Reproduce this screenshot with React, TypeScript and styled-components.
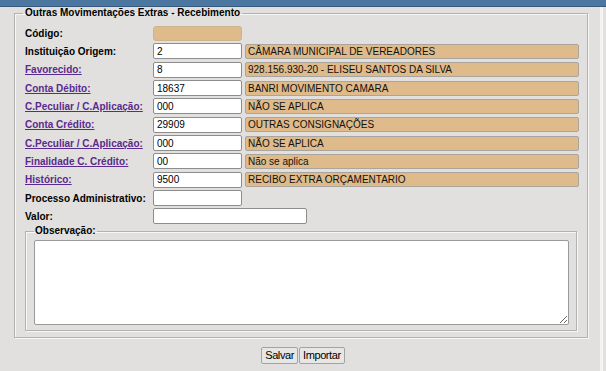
import styled, { createGlobalStyle } from "styled-components";

const GlobalStyle = createGlobalStyle`
  html, body {
    margin: 0;
    padding: 0;
    background: #e1e0de;
  }
  body {
    font-family: "Liberation Sans", Arial, sans-serif;
  }
`;

type Row = {
  label: string;
  link?: boolean;
  code?: string;
  desc?: string;
};

const rows: Row[] = [
  { label: "Instituição Origem:", code: "2", desc: "CÂMARA MUNICIPAL DE VEREADORES" },
  { label: "Favorecido:", link: true, code: "8", desc: "928.156.930-20 - ELISEU SANTOS DA SILVA" },
  { label: "Conta Débito:", link: true, code: "18637", desc: "BANRI MOVIMENTO CAMARA" },
  { label: "C.Peculiar / C.Aplicação:", link: true, code: "000", desc: "NÃO SE APLICA" },
  { label: "Conta Crédito:", link: true, code: "29909", desc: "OUTRAS CONSIGNAÇÕES" },
  { label: "C.Peculiar / C.Aplicação:", link: true, code: "000", desc: "NÃO SE APLICA" },
  { label: "Finalidade C. Crédito:", link: true, code: "00", desc: "Não se aplica" },
  { label: "Histórico:", link: true, code: "9500", desc: "RECIBO EXTRA ORÇAMENTARIO" },
  { label: "Processo Administrativo:", code: "" },
];

export default function App() {
  return (
    <Page>
      <GlobalStyle />
      <TopBar />
      <Content>
        <Fieldset>
          <Legend>Outras Movimentações Extras - Recebimento</Legend>
          <FormGrid>
            <Label>Código:</Label>
            <LockedCode />
            <span />
            {rows.map((r, i) => (
              <Line key={i} row={r} />
            ))}
            <Label>Valor:</Label>
            <ValueInput defaultValue="" />
          </FormGrid>
          <ObsFieldset>
            <ObsLegend>Observação:</ObsLegend>
            <TextArea />
          </ObsFieldset>
        </Fieldset>
        <Buttons>
          <Button>Salvar</Button>
          <Button>Importar</Button>
        </Buttons>
      </Content>
    </Page>
  );
}

const Line = ({ row }: { row: Row }) => (
  <>
    {row.link ? <LinkLabel href="#">{row.label}</LinkLabel> : <Label>{row.label}</Label>}
    <CodeInput defaultValue={row.code} />
    {row.desc !== undefined ? <Desc>{row.desc}</Desc> : <span />}
  </>
);

const Page = styled.div`
  width: 606px;
  height: 371px;
  overflow: hidden;
  background: #e1e0de;
`;

const TopBar = styled.div`
  height: 6px;
  background: #4b77a1;
  border-bottom: 1px solid #35597c;
`;

const Content = styled.div`
  width: 603px;
  height: 364px;
  border-right: 3px solid #f3f3f2;
  box-sizing: border-box;
  padding-left: 14px;
`;

const Fieldset = styled.fieldset`
  width: 574px;
  box-sizing: border-box;
  margin: 0;
  padding: 0 8px 6px 8px;
  border: 1px solid #b2b2b0;
  box-shadow: 1px 1px 0 #f7f7f6, inset 1px 1px 0 #f7f7f6;
`;

const Legend = styled.legend`
  padding: 0 2px;
  font: bold 10px/12px "Liberation Sans", Arial, sans-serif;
  color: #000;
`;

const FormGrid = styled.div`
  display: grid;
  grid-template-columns: 125px 89px 334px;
  grid-auto-rows: 16px;
  column-gap: 3px;
  row-gap: 2.35px;
  align-items: center;
  margin-top: 6px;
  padding-left: 2px;
`;

const Label = styled.span`
  font: bold 10px "Liberation Sans", Arial, sans-serif;
  color: #000;
  white-space: nowrap;
`;

const LinkLabel = styled.a`
  font: bold 10px "Liberation Sans", Arial, sans-serif;
  color: #5a2a8e;
  text-decoration: underline;
  white-space: nowrap;
`;

const CodeInput = styled.input`
  height: 16px;
  width: 89px;
  box-sizing: border-box;
  margin: 0;
  padding: 0 3px;
  border: 1px solid #8d8d8d;
  border-radius: 2px;
  background: #fff;
  font: 10px "Liberation Sans", Arial, sans-serif;
  color: #000;
  outline: none;
`;

const LockedCode = styled.div`
  height: 15px;
  width: 89px;
  box-sizing: border-box;
  border: 1px solid #cdb48f;
  border-radius: 3px;
  background: #dfba8a;
`;

const Desc = styled.div`
  height: 15px;
  box-sizing: border-box;
  padding: 0 2px;
  border: 1px solid #a9a49c;
  border-radius: 2px;
  background: #dfba8a;
  font: 10px/13px "Liberation Sans", Arial, sans-serif;
  color: #111;
  white-space: nowrap;
  overflow: hidden;
`;

const ValueInput = styled(CodeInput)`
  width: 154px;
  grid-column: 2 / span 2;
`;

const ObsFieldset = styled.fieldset`
  margin: 1px 2px 0 2px;
  padding: 0 7px 5px 8px;
  border: 1px solid #b2b2b0;
  box-shadow: 1px 1px 0 #f7f7f6, inset 1px 1px 0 #f7f7f6;
`;

const ObsLegend = styled.legend`
  padding: 0 1px;
  font: bold 10px/12px "Liberation Sans", Arial, sans-serif;
  color: #000;
`;

const TextArea = styled.textarea`
  display: block;
  width: 535px;
  height: 85px;
  box-sizing: border-box;
  margin: 3px 0 0 0;
  border: 1px solid #9a9a9a;
  border-radius: 2px;
  background: #fff;
  resize: both;
  outline: none;
`;

const Buttons = styled.div`
  display: flex;
  justify-content: center;
  gap: 1px;
  margin-top: 9px;
  padding-right: 8px;
`;

const Button = styled.button`
  height: 17px;
  padding: 0 3px;
  border: 1px solid #a3a3a3;
  border-radius: 2px;
  background: #e6e6e5;
  font: 11px "Liberation Sans", Arial, sans-serif;
  letter-spacing: -0.4px;
  color: #000;
  line-height: 15px;
`;
